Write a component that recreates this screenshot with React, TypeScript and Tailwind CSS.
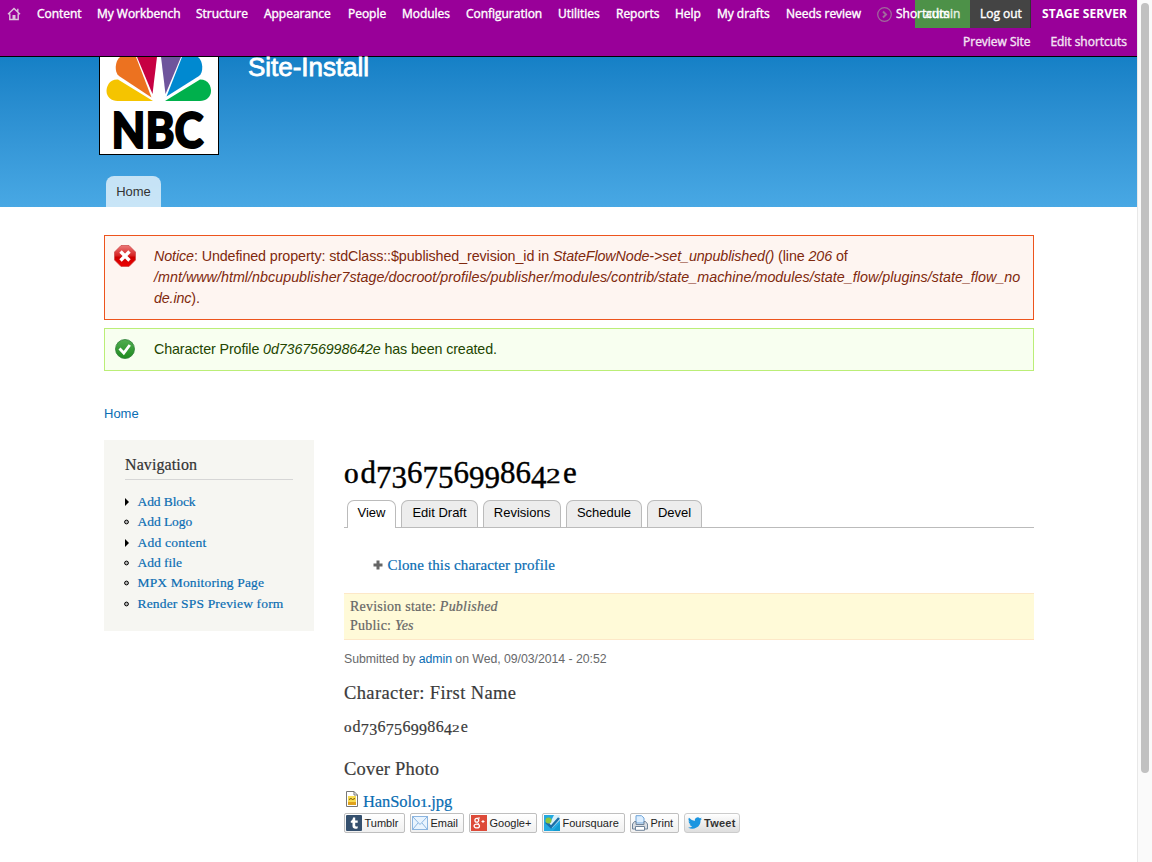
import React from "react";

const serif = "font-['Liberation_Serif',serif] [-webkit-text-stroke:0.2px_currentColor]";
const link = "text-[#0a6db3]";

const menu = [
  { label: "Content", cell: "w-[60px]" },
  { label: "My Workbench", cell: "w-[99px]" },
  { label: "Structure", cell: "w-[68px]" },
  { label: "Appearance", cell: "w-[84px]" },
  { label: "People", cell: "w-[54px]" },
  { label: "Modules", cell: "w-[64px]" },
  { label: "Configuration", cell: "w-[92px]" },
  { label: "Utilities", cell: "w-[58px]" },
  { label: "Reports", cell: "w-[59px]" },
  { label: "Help", cell: "w-[42px]" },
  { label: "My drafts", cell: "w-[69px]" },
  { label: "Needs review", cell: "w-[91px]" },
];

const navigation = [
  { label: "Add Block", parent: true, tracking: "tracking-[-0.1px]" },
  { label: "Add Logo", parent: false, tracking: "tracking-[-0.05px]" },
  { label: "Add content", parent: true, tracking: "tracking-[0.25px]" },
  { label: "Add file", parent: false, tracking: "tracking-[0px]" },
  { label: "MPX Monitoring Page", parent: false, tracking: "tracking-[0.15px]" },
  { label: "Render SPS Preview form", parent: false, tracking: "tracking-[0.17px]" },
];

const tabs = [
  { label: "Edit Draft", cell: "w-[77px]" },
  { label: "Revisions", cell: "w-[78px]" },
  { label: "Schedule", cell: "w-[76px]" },
  { label: "Devel", cell: "w-[55px]" },
];

/* Sets digits in the old style: 0-2 at x-height, 3-5, 7 and 9 hanging below the line. */
function OldStyle({ text }: { text: string }) {
  return (
    <>
      {text.split("").map((c, i) => {
        if ("012".includes(c))
          return <span key={i} className={`inline-block origin-left scale-x-135 text-[0.7em] leading-none ${c === "1" ? "w-[0.62em]" : "w-[0.76em]"}`}>{c}</span>;
        if ("34579".includes(c))
          return <span key={i} className="align-[-0.16em] leading-none">{c}</span>;
        return <React.Fragment key={i}>{c}</React.Fragment>;
      })}
    </>
  );
}

function HomeIcon() {
  return (
    <svg width="14" height="14" viewBox="0 0 14 14" fill="none" stroke="#dcc3dc" strokeWidth="1.4">
      <path d="M1 7.2 7 1.4l6 5.8M2.800 6.500v6h8.400v-6M10.800 4.600V1.800" />
      <path d="M5.500 12V8h3v4" fill="#dcc3dc" stroke="none" />
    </svg>
  );
}

function Toolbar() {
  return (
    <div className="h-[57px] border-b border-black bg-[#990099] font-['Open_Sans',sans-serif] text-[12px] tracking-[-0.03px] text-white [-webkit-text-stroke:0.4px_currentColor]">
      <div className="flex h-7 items-center whitespace-nowrap">
        <div className="w-[37px] pl-[7px]"><HomeIcon /></div>
        {menu.map((m) => (
          <div key={m.label} className={m.cell}>{m.label}</div>
        ))}
        <svg className="mr-[4px]" width="15" height="15" viewBox="0 0 15 15" fill="none" stroke="#a06a9c">
          <circle cx="7.500" cy="7.500" r="6.800" strokeWidth="1.200" />
          <path d="M6 4.500 9 7.500 6 10.500" strokeWidth="2" />
        </svg>
        <div className="z-10 w-[19px]">Shortcuts</div>
        <div className="flex h-7 w-[55px] items-center bg-[#4d9148] pl-[10px] text-[#e4f0e3]">admin</div>
        <div className="flex h-7 w-[61px] items-center border-r border-[#333] bg-[#444] pl-[10px]">Log out</div>
        <div className="pl-[11px] font-bold tracking-[0.08px] [-webkit-text-stroke:0]">STAGE SERVER</div>
      </div>
      <div className="flex h-7 items-center justify-end gap-[20px] pr-[10px] text-[#f3e3f3]">
        <span>Preview Site</span>
        <span>Edit shortcuts</span>
      </div>
    </div>
  );
}

function Logo() {
  return (
    <svg width="120" height="98" viewBox="0 0 120 98">
      <rect width="120" height="98" fill="#000" />
      <rect x="1" width="118" height="97" fill="#fff" />
      <path d="M54 44 19 22.500C10 22 7.500 30 7.500 34c0 6 5 10 11 10z" fill="#f5c400" />
      <path d="M66 44 101 22.500c9 0 11 7.500 11 11.500 0 6-5 10-11 10z" fill="#00b04c" />
      <path d="M52.500 40.500 20 19C15 15 16 4 21 0h16z" fill="#ec7220" />
      <path d="M67.500 39.500 100 19c5-4 4-15-1-19H83z" fill="#0089d0" />
      <path d="M53.500 37 38 0h20z" fill="#c60043" />
      <path d="M66.500 37 62 0h20z" fill="#6e549c" />
      <text x="12.500" y="90.500" textLength="92" lengthAdjust="spacingAndGlyphs" fontFamily="Lato" fontWeight="900" fontSize="50" stroke="#000" strokeWidth="1.800">NBC</text>
    </svg>
  );
}

function Header() {
  return (
    <div className="flex h-[150px] flex-col justify-between bg-linear-to-b from-[#1580c6] to-[#48a8e4]">
      <div className="flex pl-[99px]">
        <Logo />
        <div className="-mt-[5px] pl-[29px] text-[26px] leading-[30px] tracking-[-0.03px] text-white [-webkit-text-stroke:0.8px_white]">Site-Install</div>
      </div>
      <div className="ml-[106px] flex h-[31px] w-[55px] items-center justify-center rounded-t-[8px] bg-white/70 text-[13px] text-[#333]">Home</div>
    </div>
  );
}

function Messages() {
  return (
    <div className="mt-[28px] flex flex-col gap-2 text-[14.3px] leading-[21px]">
      <div className="flex h-[85px] border border-[#ed541d] bg-[#fef5f1] pt-[9px] pl-[9px] text-[#80290d]">
        <svg className="mr-[18px] shrink-0" width="22" height="22" viewBox="0 0 22 22">
          <defs>
            <linearGradient id="stop" x1="0" y1="0" x2="0" y2="1">
              <stop offset="0" stopColor="#eb7777" /><stop offset=".5" stopColor="#d52020" /><stop offset=".55" stopColor="#cb0000" /><stop offset="1" stopColor="#e00" />
            </linearGradient>
          </defs>
          <path d="M7 .5h8L21.500 7v8L15 21.500H7L.5 15V7z" fill="url(#stop)" stroke="#c44" strokeWidth=".7" />
          <path d="m6.500 6.500 9 9m0-9-9 9" stroke="#fff" strokeWidth="3.400" />
        </svg>
        <div className="pt-px">
          <div className="tracking-[-0.1px]"><i>Notice</i>: Undefined property: stdClass::$published_revision_id in <i>StateFlowNode-&gt;set_unpublished()</i> (line <i>206</i> of</div>
          <div className="tracking-[0.025px] italic">/mnt/www/html/nbcupublisher7stage/docroot/profiles/publisher/modules/contrib/state_machine/modules/state_flow/plugins/state_flow_no</div>
          <div className="tracking-[-0.15px]"><i>de.inc</i>).</div>
        </div>
      </div>
      <div className="flex h-[43px] border border-[#bbee77] bg-[#f8fff0] pt-[10px] pl-[10px] text-[#234600]">
        <svg className="mr-[19px] shrink-0" width="20" height="20" viewBox="0 0 20 20">
          <defs>
            <linearGradient id="ok" x1="0" y1="0" x2="0" y2="1">
              <stop offset="0" stopColor="#51ad51" /><stop offset="1" stopColor="#1e8a1e" />
            </linearGradient>
          </defs>
          <circle cx="10" cy="10" r="9.500" fill="url(#ok)" stroke="#2e7f3a" strokeWidth=".8" />
          <path d="m4.500 9.500 4.300 4.500 6-8" fill="none" stroke="#fff" strokeWidth="2.800" />
        </svg>
        <div className="tracking-[-0.12px]">Character Profile <i>0d736756998642e</i> has been created.</div>
      </div>
    </div>
  );
}

function Sidebar() {
  return (
    <div className={`h-[191px] w-[210px] bg-[#f6f6f2] pr-[21px] pl-[20px] pt-[14px] ${serif}`}>
      <div className="ml-px h-[26px] border-b border-[#d6d6d6] text-[16px] leading-[21px] tracking-[0.1px] text-[#333]">Navigation</div>
      <div className="pt-[11.6px]">
        {navigation.map((n) => (
          <div key={n.label} className="flex h-[20.4px] items-center">
            <svg className="mr-[7.500px]" width="6" height="8" viewBox="0 0 6 8">
              {n.parent ? <path d="M1 0v8l4-4z" fill="#000" /> : <circle cx="2.500" cy="4" r="1.900" fill="#bbb" stroke="#000" />}
            </svg>
            <span className={`text-[13.5px] leading-[20px] whitespace-nowrap ${n.tracking} ${link}`}>{n.label}</span>
          </div>
        ))}
      </div>
    </div>
  );
}

function Tabs() {
  return (
    <div className="mt-[11px] flex h-[28px] items-start gap-[5px] border-b border-[#bbb] pl-[3px] text-[13px] leading-[23px] text-black">
      <div className="h-[28px] w-[49px] rounded-t-[7px] border border-b-0 border-[#bbb] bg-white text-center">View</div>
      {tabs.map((t) => (
        <div key={t.label} className={`h-[27px] rounded-t-[7px] border border-b-0 border-[#bbb] bg-[#ededed] text-center ${t.cell}`}>{t.label}</div>
      ))}
    </div>
  );
}

const shareIcons = {
  tumblr: (
    <svg width="16" height="16" viewBox="0 0 16 16">
      <rect width="16" height="16" rx="1" fill="#35506e" />
      <path d="M7 2.500h2.200V5.500h2.500v2.200H9.200v2.800c0 1 .9 1.300 2.500.7v2c-2.500 1.100-5.200.5-5.200-2.200V7.700H4.800V6C6.200 5.500 6.800 4.300 7 2.500z" fill="#fff" />
    </svg>
  ),
  email: (
    <svg width="16" height="16" viewBox="0 0 16 16" fill="#e9f4fe" stroke="#8bb5e0">
      <rect x=".5" y="1.500" width="15" height="13" />
      <path d="m1 14 5-6m9 6-5-6M1 2l7 7.500L15 2" />
    </svg>
  ),
  google: (
    <svg width="16" height="16" viewBox="0 0 16 16" fill="none" stroke="#fff">
      <rect width="16" height="16" fill="#dd4b39" stroke="none" />
      <circle cx="5.800" cy="5.200" r="1.900" strokeWidth="1.300" />
      <ellipse cx="5.800" cy="11" rx="2.700" ry="1.900" strokeWidth="1.300" />
      <path d="M6.500 7.300 7.600 9M6.500 3h2.500M10.500 6.500h3M12 5v3" />
    </svg>
  ),
  foursquare: (
    <svg width="16" height="16" viewBox="0 0 16 16">
      <rect width="16" height="16" fill="#23a9e0" />
      <path d="M10 0h6v5L8 13l-3-3z" fill="#d8f0fa" />
      <path d="m2 7 5 5 8-9" fill="none" stroke="#1b6fa8" strokeWidth="2.500" />
      <circle cx="4.500" cy="5.500" r="3" fill="#8cc63e" />
      <path d="M9 16 16 8v8z" fill="#139bd0" />
    </svg>
  ),
  print: (
    <svg width="16" height="16" viewBox="0 0 16 16" stroke="#70849a">
      <path d="M4 8V.7h5.500L12 3v5z" fill="#dceeff" stroke="#6fa4d8" />
      <path d="M2.500 6.500h1.500v3h8v-3h1.500l2 2.500v5H.5V9z" fill="#d9dde2" />
      <path d="M3.500 11.500h9v3.800h-9z" fill="#fff" />
    </svg>
  ),
  tweet: (
    <svg width="14" height="12" viewBox="0 0 24 20" fill="#1b95e0">
      <path d="M23.900 2.600c-.9.400-1.800.7-2.800.8 1-.6 1.800-1.600 2.200-2.700-.9.600-2 1-3.100 1.200A4.900 4.900 0 0 0 11.800 6.400 14 14 0 0 1 1.700 1.200a4.900 4.900 0 0 0 1.500 6.600c-.8 0-1.600-.2-2.200-.6a4.900 4.900 0 0 0 3.900 4.900c-.7.200-1.500.2-2.200.1a4.900 4.900 0 0 0 4.600 3.400A9.900 9.900 0 0 1 0 17.600 14 14 0 0 0 21.500 5.200c1-.7 1.800-1.600 2.400-2.600z" />
    </svg>
  ),
};

const shares = [
  { icon: shareIcons.tumblr, label: "Tumblr", cell: "w-[61px]" },
  { icon: shareIcons.email, label: "Email", cell: "w-[54px]" },
  { icon: shareIcons.google, label: "Google+", cell: "w-[68px]" },
  { icon: shareIcons.foursquare, label: "Foursquare", cell: "w-[83px]" },
  { icon: shareIcons.print, label: "Print", cell: "w-[49px]" },
];

function ShareBar() {
  return (
    <div className="flex h-5 gap-[5px] text-[11px] whitespace-nowrap text-[#222]">
      {shares.map((s) => (
        <div key={s.label} className={`flex items-center gap-[2.5px] rounded-[2px] border border-[#bfbfbf] bg-linear-to-b from-white to-[#f0f0f0] pl-px ${s.cell}`}>
          {s.icon}
          <span>{s.label}</span>
        </div>
      ))}
      <div className="flex w-[56px] items-center gap-[2px] rounded-[3px] border border-[#ccc] bg-linear-to-b from-white to-[#dedede] pl-[3px] font-bold tracking-[0.25px] text-[#333]">
        {shareIcons.tweet}
        <span>Tweet</span>
      </div>
    </div>
  );
}

function FileIcon() {
  return (
    <svg width="12" height="16" viewBox="0 0 12 16">
      <path d="M.5.5h7.500l3.500 3.500v11.500H.5z" fill="#fff" stroke="#777" />
      <path d="M8 .5V4h3.500" fill="none" stroke="#777" />
      <rect x="2" y="5" width="8" height="9" fill="#f8dc52" />
      <path d="M3 8.500 5 7.500l1.500 1L9 7.500" stroke="#765500" fill="none" />
      <path d="M2 11h8v3H2z" fill="#e0a11c" />
    </svg>
  );
}

function Article() {
  return (
    <div className={`w-[690px] text-[#3b3b3b] ${serif}`}>
      <div className="mt-[16px] h-[33px] text-[31px] leading-[33px] whitespace-nowrap text-black [-webkit-text-stroke:0.4px_currentColor]"><OldStyle text="0d736756998642e" /></div>
      <div className="font-['Liberation_Sans',sans-serif] [-webkit-text-stroke:0]"><Tabs /></div>
      <div className="mt-[27px] flex h-[20px] items-center pl-[28.5px]">
        <svg className="mr-[5px]" width="10" height="10" viewBox="0 0 10 10"><path d="M3.500.5h3v3h3v3h-3v3h-3v-3h-3v-3h3z" fill="#666" /></svg>
        <span className={`text-[15px] tracking-[0.14px] ${link}`}>Clone this character profile</span>
      </div>
      <div className="mt-[18px] h-[47px] border-y border-[#fde8c8] bg-[#fffad8] px-[6px] pt-[3px] text-[14px] leading-[19px] tracking-[0.22px] text-[#666]">
        <div>Revision state: <i>Published</i></div>
        <div>Public: <i>Yes</i></div>
      </div>
      <div className="mt-[9px] h-[20px] font-['Liberation_Sans',sans-serif] text-[12.3px] leading-[20px] tracking-[-0.04px] text-[#68696b] [-webkit-text-stroke:0]">
        Submitted by <span className={link}>admin</span> on Wed, 09/03/2014 - 20:52
      </div>
      <div className="mt-[12px] h-[24px] text-[18.5px] leading-[24px] tracking-[0.38px]">Character: First Name</div>
      <div className="mt-[11px] h-[22px] text-[16px] leading-[22px] tracking-[0.3px]"><OldStyle text="0d736756998642e" /></div>
      <div className="mt-[19px] h-[24px] text-[18.5px] leading-[24px] tracking-[0.2px]">Cover Photo</div>
      <div className="mt-[10px] flex h-[22px] gap-[5px] pl-[2px]">
        <FileIcon />
        <span className={`text-[16.5px] leading-[22px] tracking-[-0.1px] ${link}`}><OldStyle text="HanSolo1.jpg" /></span>
      </div>
      <div className="font-['Liberation_Sans',sans-serif] [-webkit-text-stroke:0]"><ShareBar /></div>
    </div>
  );
}

export default function App() {
  return (
    <div className="flex h-[862px] w-[1152px] overflow-hidden bg-white font-['Liberation_Sans',Arial,sans-serif]">
      <div className="w-[1137px]">
        <Toolbar />
        <Header />
        <div className="ml-[104px] w-[930px]">
          <Messages />
          <div className={`mt-[33px] h-[20px] text-[13px] leading-[20px] ${link}`}>Home</div>
          <div className="mt-[16px] flex gap-[30px]">
            <Sidebar />
            <Article />
          </div>
        </div>
      </div>
      <div className="w-[15px] border-l border-[#e8e8e8] bg-[#fafafa] pt-[3px] pl-[3px]">
        <div className="h-[770px] w-[8px] rounded-full bg-[#c1c1c1]" />
      </div>
    </div>
  );
}
